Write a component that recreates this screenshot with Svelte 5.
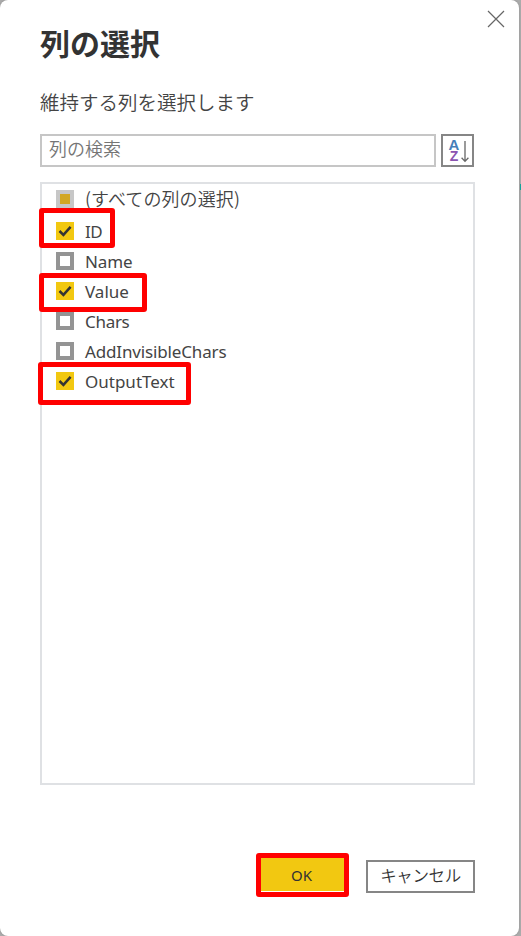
<script>
  let columns = $state([
    { name: 'ID', checked: true, mark: 'id', spacing: -0.4 },
    { name: 'Name', checked: false, spacing: -0.1 },
    { name: 'Value', checked: true, mark: 'value', spacing: 0 },
    { name: 'Chars', checked: false, spacing: -0.3 },
    { name: 'AddInvisibleChars', checked: false, spacing: -0.15 },
    { name: 'OutputText', checked: true, mark: 'output', spacing: 0 }
  ]);
</script>

<div class="backdrop">
  <section class="dialog">
    <button class="close" aria-label="閉じる">
      <svg width="18" height="18" viewBox="0 0 18 18"><path d="M1 1L17 17M17 1L1 17" /></svg>
    </button>
    <h1>列の選択</h1>
    <p>維持する列を選択します</p>
    <div class="search">
      <input type="text" placeholder="列の検索" />
      <button class="sort" aria-label="並べ替え">
        <span class="letters"><b>A</b><b class="z">Z</b></span>
        <svg width="8" height="23" viewBox="0 0 8 23"><path d="M4 1V21.5M.6 17.8L4 21.4L7.4 17.8" /></svg>
      </button>
    </div>
    <div class="list">
      <div class="row all">
        <span class="box partial"></span><span class="label">(すべての列の選択)</span>
      </div>
      {#each columns as col}
        <div class="row">
          <button class="box" class:checked={col.checked} aria-label={col.name} onclick={() => (col.checked = !col.checked)}>
            {#if col.checked}
              <svg width="18" height="18" viewBox="0 0 18 18"><path d="M3.5 9L7.4 12.9L14.6 4.8" /></svg>
            {/if}
          </button>
          <span class="label" style="letter-spacing: {col.spacing}px">{col.name}</span>
          {#if col.mark}<i class="mark {col.mark}"></i>{/if}
        </div>
      {/each}
    </div>
    <footer>
      <div class="okwrap"><button class="ok">OK</button><i class="mark okmark"></i></div>
      <button class="cancel">キャンセル</button>
    </footer>
  </section>
  <aside><i></i></aside>
</div>

<style>
  :global(body) { background: #ababab; overflow: hidden; }
  * { box-sizing: border-box; }
  button { padding: 0; margin: 0; border: 0; background: none; font: inherit; color: inherit; }
  .backdrop {
    display: flex;
    width: 521px;
    height: 936px;
    background: #ababab;
    font-family: "Noto Sans", "Noto Sans CJK JP", sans-serif;
    color: #444;
  }
  .dialog {
    position: relative;
    display: flex;
    flex-direction: column;
    width: 519px;
    height: 936px;
    padding: 0 44px 0 40px;
    background: #fff;
    border-radius: 8px;
    box-shadow: 0 0 2px #888;
  }
  aside { width: 2px; padding-top: 184px; position: relative; }
  aside i { display: block; height: 6px; margin-left: 1px; background: #16a39a; }
  .close { position: absolute; left: 487px; top: 10px; width: 18px; height: 18px; }
  .close svg { display: block; fill: none; stroke: #666; stroke-width: 1.2; }
  h1 {
    margin: 22px 0 0;
    height: 42px;
    font: 700 30px/40px "Noto Sans CJK JP", sans-serif;
    color: #333;
    white-space: nowrap;
  }
  p {
    margin: 22px 0 0;
    height: 32px;
    font: 350 19.5px/32px "Noto Sans CJK JP", sans-serif;
    white-space: nowrap;
    color: #444;
  }
  .search { display: flex; gap: 5px; margin-top: 16px; height: 33px; }
  input {
    width: 396px;
    height: 33px;
    padding: 0 7px 5px;
    border: 2px solid #c6c6c6;
    border-radius: 0;
    outline: 0;
    font: 350 18px/24px "Noto Sans CJK JP", sans-serif;
  }
  input::placeholder { color: #757575; opacity: 1; }
  .sort {
    display: flex;
    width: 33px;
    height: 33px;
    padding: 4px 0 0 5px;
    border: 2px solid #868686;
  }
  .letters { display: flex; flex-direction: column; width: 12px; margin-top: -1px; font: 700 15px/11px "Liberation Sans", sans-serif; color: #467fb9; text-align: center; }
  .letters b { height: 12px; }
  .letters .z { color: #8b54b0; font-size: 14px; height: 11px; line-height: 11px; }
  .sort svg { fill: none; stroke: #666; stroke-width: 1.3; margin-left: 1px; }
  .list {
    width: 435px;
    height: 603px;
    margin-top: 15px;
    border: 2px solid #dfe1e4;
    color: #444;
  }
  .row { position: relative; display: flex; align-items: center; height: 30px; padding-left: 14px; font-size: 17px; line-height: 28px; white-space: nowrap; }
  .row.all { height: 32px; padding-bottom: 2px; font-family: "Noto Sans CJK JP", sans-serif; font-weight: 350; font-size: 18px; color: #444; }
  .label { margin-left: 11px; padding-top: 2px; }
  .all .label { padding: 0 0 2px; letter-spacing: .1px; }
  .box { flex: none; display: block; width: 18px; height: 18px; border: 4px solid #949494; background: #fff; }
  .box.checked { border: 0; background: #f2c811; }
  .box.partial { border-color: #c7c7c7; background: #d2a722; }
  .box svg { display: block; fill: none; stroke: #333; stroke-width: 2.5; }
  .mark { position: absolute; border: 5px solid #f00; border-radius: 3px; pointer-events: none; }
  .id { left: -3px; top: -8px; width: 76px; height: 40px; }
  .value { left: -3px; top: -3px; width: 108px; height: 39px; }
  .output { left: -4px; top: -4px; width: 153px; height: 43px; }
  footer { display: flex; margin-top: 73px; padding-left: 221px; height: 40px; }
  .okwrap { position: relative; width: 83px; height: 33px; margin-right: 22px; }
  .ok { display: block; width: 83px; height: 33px; padding: 1px 2px 0 0; background: #f2c811; font-size: 15px; color: #333; line-height: 32px; }
  .okmark { left: -5px; top: -5px; width: 93px; height: 44px; }
  .cancel {
    width: 109px;
    height: 33px;
    margin-top: 2px;
    padding-bottom: 3px;
    border: 2px solid #868686;
    font: 350 16.5px/26px "Noto Sans CJK JP", sans-serif;
    letter-spacing: -.4px;
    color: #333;
    white-space: nowrap;
  }
</style>
